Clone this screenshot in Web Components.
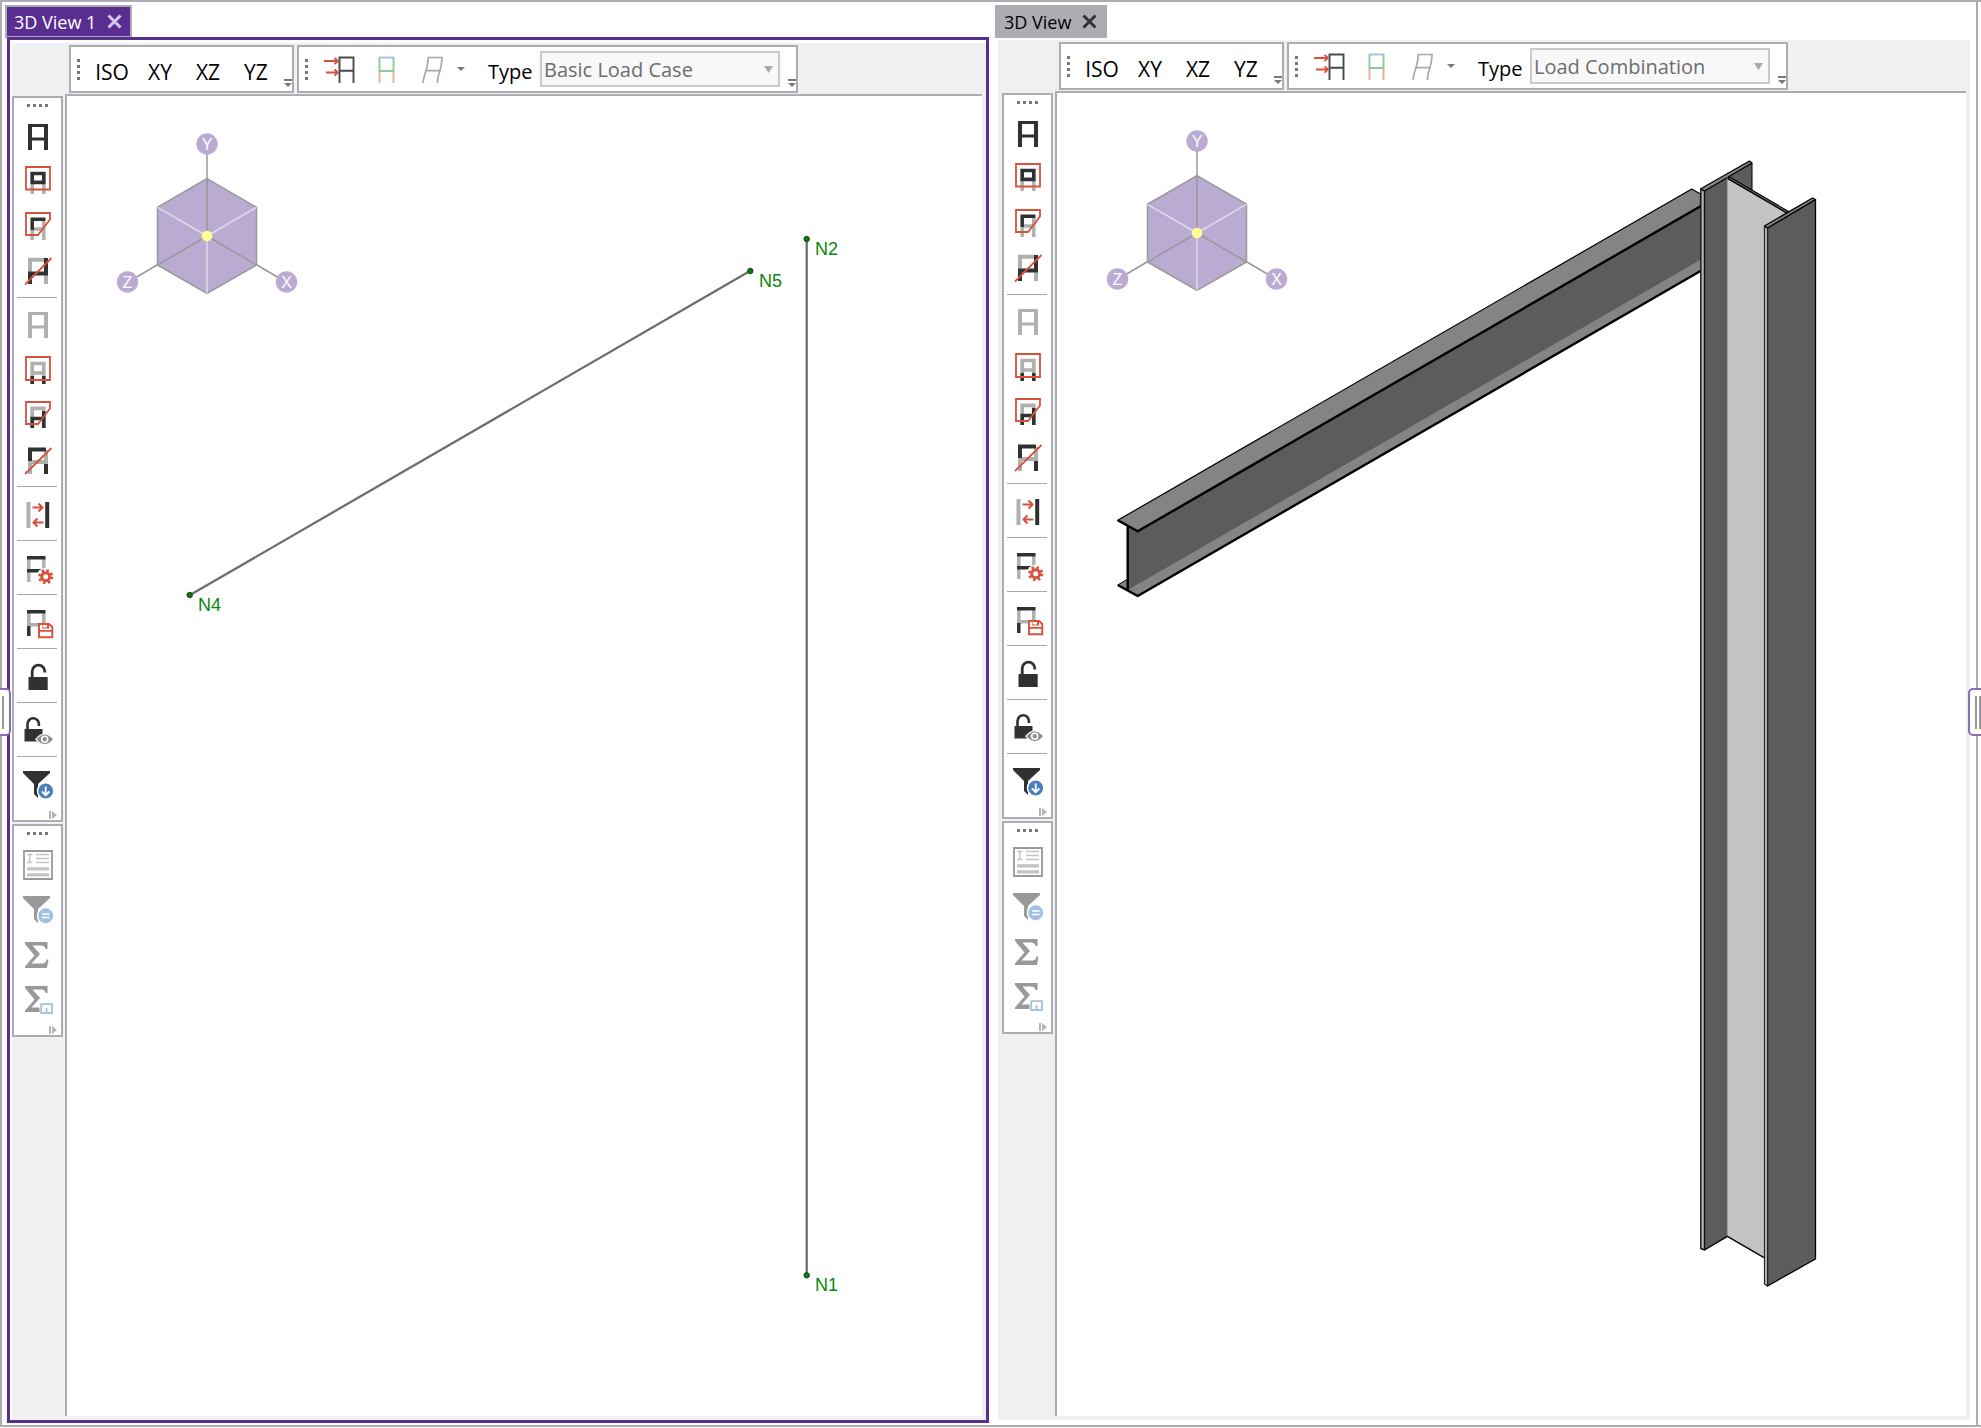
<!DOCTYPE html>
<html lang="en">
<head>
<meta charset="utf-8">
<title>3D View</title>
<style>
  html, body { margin: 0; height: 100%; background: #fff; }
  body {
    font-family: "Open Sans", "Noto Sans", sans-serif;
    --line: #acacb2;
    --panel: #f0f0f0;
    --accent: #5a2e90;
  }
</style>
</head>
<body>
<work-space>
  <view-pane name="3D View 1" load-type="Basic Load Case" active>
    <svg width="100%" height="100%" aria-label="Wireframe model">
      <g transform="translate(-67 -96)">
        <g stroke="#6e6e6e" stroke-width="2.300">
          <path d="M806.700 239V1275M190 595L750 271"/>
        </g>
        <g fill="#0b7d0b" stroke="#1d3a1d" stroke-width="1">
          <circle cx="806.700" cy="239" r="2.700"/><circle cx="806.700" cy="1275.300" r="2.700"/>
          <circle cx="750.300" cy="271" r="2.700"/><circle cx="189.700" cy="595" r="2.700"/>
        </g>
        <g fill="#0a870a" font-family="Liberation Sans, Arial, sans-serif" font-size="18">
          <text x="815" y="255">N2</text>
          <text x="815" y="1291">N1</text>
          <text x="759" y="287">N5</text>
          <text x="198" y="611">N4</text>
        </g>
      </g>
    </svg>
  </view-pane>
  <view-pane name="3D View" load-type="Load Combination">
    <svg width="100%" height="100%" aria-label="Rendered model">
      <g transform="translate(-1057 -93)" stroke-linejoin="round">
        <!-- beam -->
        <path d="M1117.7 585L1127.7 579.3L1700.5 248V271L1137.7 596Z" fill="#848484"/>
        <path d="M1127.7 526L1700.5 200V259.7L1127.7 590Z" fill="#5c5c5c"/>
        <path d="M1117.7 520.3L1691.7 189L1700.5 194V206L1137.7 531.3Z" fill="#848484" stroke="#000" stroke-width="1.2"/>
        <path d="M1117.7 520.3L1137.7 531.3L1700.5 206.3M1117.7 585L1137.7 596L1700.5 271M1127.7 526V590" fill="none" stroke="#000" stroke-width="2.4"/>
        <path d="M1117.7 585L1127 579.5" stroke="#000" stroke-width="1"/>
        <!-- column: rear flange -->
        <path d="M1728 176L1752 163V190L1744 186Z" fill="#5c5c5c" stroke="#000"/>
        <path d="M1704.5 191L1727.4 177V1236.3L1704.5 1250Z" fill="#5c5c5c"/>
        <path d="M1700.8 189L1704.5 191V1250L1700.8 1248.5Z" fill="#b2b2b2" stroke="#111" stroke-width="1.4"/>
        <path d="M1700.8 188.7L1749.5 161L1752 163L1704.5 191Z" fill="#848484" stroke="#000" stroke-width="1.3"/>
        <!-- column: web -->
        <path d="M1727.4 177L1788 212L1765 226V1257.7L1727.4 1236.3Z" fill="#c3c3c3"/>
        <path d="M1727.4 178V1236" stroke="#999" stroke-width="1"/>
        <path d="M1704.5 1250L1727.4 1236.3L1764 1257.7" fill="none" stroke="#000" stroke-width="1.4"/>
        <path d="M1728 177.5L1788 212.5" stroke="#000" stroke-width="3.4"/>
        <path d="M1729 177.8L1787 211.8" stroke="#777" stroke-width="1"/>
        <!-- column: front flange -->
        <path d="M1767.5 228L1815.5 199.5V1259L1767.5 1286Z" fill="#5c5c5c" stroke="#000" stroke-width="1.3"/>
        <path d="M1764.5 226L1767.5 228V1286L1764.5 1284Z" fill="#c0c0c0" stroke="#222" stroke-width="1.2"/>
        <path d="M1764.5 226L1812.5 198L1815.5 199.5L1767.5 228Z" fill="#848484" stroke="#000" stroke-width="1.3"/>
      </g>
    </svg>
  </view-pane>
</work-space>

<script>
const define = (tag, build) => customElements.define(tag, class extends HTMLElement {
  connectedCallback() {
    if (this.shadowRoot) return;
    this.attachShadow({ mode: "open" }).innerHTML = build(this);
  }
});

const D = "#303232", G = "#b0b0b0", R = "#d9503c", M = "#999";
const bar = (c, w, d) => `<path d="${d}" stroke="${c}" stroke-width="${w}" fill="none"/>`;
const zone = bar(R, 1.8, "M12 9H36V15.500L24 31H12Z");
const funnel = (c) => `<path d="M9 9H36V11L24 22V36L20 32V22L9 11Z" fill="${c}"/>`;
const sigma = `<path d="M11 10H33.500V17H31.500Q31 13.500 27 13.500H18.500L26 22L17.500 31.500H28Q32 31.500 32.500 27.500H34.500L33 36H11V34.500L20.500 23.500L11 12Z" fill="${M}"/>`;

/* Glyphs are drawn on a 47 by 45 grid, the size of one rail button. */
const icons = {
  "frame": bar(D, 4, "M16 10V36M32 10V36") + bar(D, 3, "M14 11.500H34M14 25H34"),
  "frame-window": bar(G, 3.5, "M18.200 25V35M29.800 25V35") + bar(R, 1.8, "M12 8H36V30.500H12Z") +
    bar(D, 3.7, "M18.200 14.500H29.800V23.300H18.200Z"),
  "frame-polygon": bar(G, 3.5, "M18.200 26V36M29.800 17V36M18 25H30") + bar(D, 3.5, "M18.200 26V15.300H31.500") + zone,
  "frame-line": bar(G, 4, "M16 23V10.700H32M32 24V35") + bar(D, 4, "M32 9V24.500H16V35") + bar(R, 1.8, "M11 35.500L37.500 9"),
  "off": bar(G, 4, "M16 9V35M32 9V35") + bar(G, 3, "M14 10.500H34M14 24H34"),
  "off-window": bar(G, 3.7, "M18.200 15.500H29.800V25H18.200ZM18.200 25V28M29.800 25V28") +
    bar(D, 3.7, "M18.200 28V36M29.800 28V36") + bar(R, 1.8, "M12 9H36V32H12Z"),
  "off-polygon": bar(G, 3.7, "M18.200 25V15.300H29.800V18") + bar(D, 3.7, "M29.800 18V35M18.200 35V25.500H29.800") + zone,
  "off-line": bar(G, 4, "M32 12V26M16 36V24H32") + bar(D, 4, "M16 23V11.500H32M32 26V36") + bar(R, 1.8, "M11 36L37.500 10"),
  "swap": bar(G, 4, "M14.500 10V36") + bar(D, 4, "M33.200 10V36") +
    bar(R, 2, "M18.500 15.500H28.500M24.500 11.500L28.500 15.500L24.500 19.500M29.500 30.500H19.500M23.500 26.500L19.500 30.500L23.500 34.500"),
  "settings": bar(G, 3.5, "M14.800 13V36M29.800 13V25") + bar(D, 3.5, "M13 11.800H31.500M13 24.800H27") +
    `<circle cx="31.700" cy="30.700" r="9" fill="#fff"/><circle cx="31.700" cy="30.700" r="4" fill="none" stroke="${R}" stroke-width="3"/>
     <circle cx="31.700" cy="30.700" r="6.300" fill="none" stroke="${R}" stroke-width="2.600" stroke-dasharray="2.500 2.448"/>`,
  "save": bar(G, 3.5, "M14.800 13V26M29.800 13V23M13 24.800H24") + bar(D, 3.5, "M13 11.800H31.500M14.800 26V36") +
    `<path d="M25 24H35L38.300 27V37.300H25Z" fill="#fff" stroke="${R}" stroke-width="1.900"/>
     <path d="M28 24H35V28.500H28ZM25 30H38V31.800H25Z" fill="${R}"/><path d="M28.500 25H33V27.500H28.500Z" fill="#fff"/>`,
  "lock": `<path d="M14.500 23H33.700V36H14.500Z" fill="${D}"/>` + bar(D, 2.8, "M18.200 24V17.500A6.300 6.300 0 0 1 30.800 17.500V18.500"),
  "lock-view": `<path d="M10.500 21H28.500V33.500H10.500Z" fill="${D}"/>` + bar(D, 2.6, "M13.500 22V16A5.700 5.700 0 0 1 24.900 16V18") +
    `<path d="M21 31.300Q30.700 19 40.400 31.300Q30.700 43 21 31.300Z" fill="#fff"/>
     <path d="M22.500 31.300Q30.700 21.500 39 31.300Q30.700 41 22.500 31.300Z" fill="#8e8e8e"/>
     <circle cx="30.700" cy="31.300" r="3" fill="#8e8e8e" stroke="#fff" stroke-width="1.500"/>`,
  "filter": funnel(D) + `<circle cx="31.700" cy="29" r="8.200" fill="#4a7fbb" stroke="#fff" stroke-width="1.500"/>` +
    bar("#fff", 1.8, "M31.700 24.500V33M28 29.500L31.700 33.200L35.400 29.500"),
  "report": `<path d="M10 9H38V37H10Z" fill="#fff" stroke="${M}" stroke-width="1.800"/>` +
    bar("#c4c4c4", 1.5, "M13 12.500H18.500M15.700 12.500V20.500M13 20.500H18.500M22 12.500H35M22 16.500H35M22 20.500H35") +
    bar("#c4c4c4", 3.2, "M13 26.800H35M13 32.800H35"),
  "filter-equal": funnel(M) + `<circle cx="31.700" cy="28.700" r="8.200" fill="#a4c0e0" stroke="#fff" stroke-width="1.500"/>` +
    bar("#fff", 1.7, "M28 27H35.500M28 30.500H35.500"),
  "sum": sigma,
  "sum-local": `<g transform="translate(0 -1)">${sigma}</g><path d="M25.500 25.500H39.500V37.500H25.500Z" fill="#fff"/>` +
    bar("#a4c0e0", 1.8, "M27.200 27.200H38V36H27.200ZM32.600 31V36"),
  "loads": bar("#4a4a4a", 1.9, "M23.500 36V10.500H37.500V36M23.500 23.700H37.500") +
    bar(R, 1.8, "M8 14H22M18.500 10.800L22 14L18.500 17.200M10 25.500H22M18.500 22.300L22 25.500L18.500 28.700"),
  "colors": bar("#efa79c", 1.9, "M16.500 24V36M30.500 24V36") + bar("#8ccb9c", 1.9, "M16.500 11V24H30.500V11") + bar("#a4c0e0", 1.9, "M15.600 10.500H31.400"),
  "deformed": bar("#a8a8a8", 1.7, "M13 36Q13.500 31 16 23.500Q18 17 18.300 10.500H32Q32 17 30 23.500Q27.500 30 27.300 36M15.800 23.700H30")
};

/* Button holding either slotted text or a named glyph. */
define("tool-button", el => `
  <style>
    :host { display: block; }
    button { display: flex; align-items: center; justify-content: center; width: 100%; height: 100%;
      margin: 0; padding: 0; border: 0; background: none; font: inherit; color: #000; }
    .text { padding-top: 5px; }
    svg { flex: none; }
  </style>
  <button type="button" aria-label="${el.getAttribute("label") || el.textContent}">
    ${el.hasAttribute("icon")
      ? `<svg width="47" height="45" viewBox="0 0 47 45" aria-hidden="true">${icons[el.getAttribute("icon")]}</svg>`
      : `<span class="text"><slot></slot></span>`}
    ${el.hasAttribute("menu")
      ? `<svg width="8" height="4" viewBox="0 0 8 4" aria-hidden="true"><path d="M0 0H8L4 4Z" fill="#777"/></svg>` : ""}
  </button>`);

/* Bordered strip with a drag grip, slotted tools and an overflow mark. */
define("tool-strip", el => {
  const v = el.hasAttribute("vertical");
  const dot = "<i></i>".repeat(4);
  return `
  <style>
    :host { display: flex; flex-direction: ${v ? "column" : "row"}; box-sizing: border-box;
      border: 2px solid var(--line); background: #fff; flex: none; }
    .grip { display: flex; flex: none; gap: 3px; box-sizing: border-box;
      ${v ? "height: 16px; padding-top: 6px; justify-content: center;"
          : "width: 17px; padding-left: 6px; flex-direction: column; justify-content: center;"} }
    i { width: 3px; height: 3px; background: #777; }
    .more { flex: none; display: flex; align-items: flex-end; justify-content: flex-end;
      ${v ? "height: 13px; padding-right: 4px;" : "width: 12px; padding-bottom: 4px;"} }
  </style>
  <div class="grip">${dot}</div>
  <slot></slot>
  <div class="more">${v
    ? `<svg width="8" height="12"><path d="M0 3H2V11H0ZM3 3L8 7L3 11Z" fill="#b4b4b4"/></svg>`
    : `<svg width="8" height="9"><path d="M0 1H8V3H0ZM0 5H8L4 9Z" fill="#777"/></svg>`}</div>`;
});

define("tool-rule", () => `
  <style>:host { display: block; height: 1px; margin: 3px 4px 5px 3px; background: #a8a8ad; }</style>`);

define("load-type", el => `
  <style>
    :host { display: flex; align-items: center; font-size: 20px; color: #000; }
    label { width: 52px; padding-top: 5px; }
    .box { display: grid; align-items: center; }
    select, svg { grid-area: 1 / 1; }
    select { appearance: none; width: 240px; height: 36px; margin: 0; padding: 1px 2px 0; box-sizing: border-box;
      border: 2px solid #c9c9cf; border-radius: 0; background: #f8f8f8; color: #6d6d6d; opacity: 1; font: inherit; line-height: 30px; }
    svg { justify-self: end; margin-right: 7px; }
  </style>
  <label for="type">Type</label>
  <span class="box">
    <select id="type" disabled><option>${el.getAttribute("value")}</option></select>
    <svg width="9" height="7" aria-hidden="true"><path d="M0 0H9L4.500 7Z" fill="#a8a8ad"/></svg>
  </span>`);

define("view-cube", () => `
  <style>:host { display: block; width: 182px; height: 168px; }</style>
  <svg width="182" height="168" viewBox="0 0 182 168" aria-label="View cube">
    <g transform="translate(91 104)" stroke-width="1.500">
      <path d="M0 -57V-84M50 29L72 42M-50 29L-72 42" stroke="#999"/>
      <path d="M0 -57.300L49.500 -28.700V29L0 57.300L-49.500 29V-28.700Z" fill="#baabd3" stroke="#999"/>
      <path d="M0 0V-57.300M0 0L49.500 29M0 0L-49.500 29" stroke="#999"/>
      <path d="M0 0V57.300M0 0L49.500 -28.700M0 0L-49.500 -28.700" stroke="#dfdbe6"/>
      <circle r="5.300" fill="#ffff93"/>
      <g fill="#baabd3"><circle cy="-92" r="10.700"/><circle cx="79.500" cy="46" r="10.700"/><circle cx="-79.500" cy="46" r="10.700"/></g>
      <g fill="#fff" font-family="Liberation Sans, Arial, sans-serif" font-size="16" text-anchor="middle">
        <text y="-86">Y</text><text x="79.500" y="52">X</text><text x="-79.500" y="52">Z</text>
      </g>
    </g>
  </svg>`);

const tool = (icon, label) => `<tool-button icon="${icon}" label="${label}"></tool-button>`;
const rule = "<tool-rule></tool-rule>";

define("view-pane", el => `
  <style>
    :host { display: flex; flex-direction: column; min-width: 0; }
    .tab { align-self: flex-start; display: flex; align-items: center; box-sizing: border-box; height: 33px;
      border: 2px solid var(--line); background: var(--line); color: #000; font-size: 18px; font-weight: 500; padding: 0 8px 0 7px; gap: 11px; }
    .tab button { display: flex; border: 0; padding: 0; margin: 0; background: none; color: #333; }
    .frame { flex: 1; display: flex; min-height: 0; margin: 2px 0 3px 3px; }
    .body { flex: 1; min-width: 0; display: grid; grid-template: auto 1fr / 53px 1fr;
      background: var(--panel); padding: 2px 4px 4px; }
    .top { grid-column: 2; display: flex; gap: 3px; padding-left: 4px; margin-bottom: 1px; }
    .top tool-strip { height: 48px; }
    .top tool-button { width: 48px; font-size: 21px; font-weight: 500; }
    .top tool-button[icon] { width: 47px; }
    .top tool-button[menu] { width: 55px; }
    load-type { margin: 0 4px 0 23px; }
    .rail { display: flex; flex-direction: column; gap: 2px; padding: 2px 2px 0 0; }
    .rail tool-button { height: 45px; }
    .canvas { position: relative; background: #fff; border: solid var(--line); border-width: 2px 0 0 2px; overflow: hidden; }
    .canvas ::slotted(svg) { display: block; position: absolute; inset: 0; }
    view-cube { position: absolute; left: 49px; top: 36px; }

    :host([active]) .tab { background: var(--accent); color: #fff; }
    :host([active]) .tab button { color: #d3c6e6; }
    :host([active]) .frame { margin: -1px 0 0 2px; border: 3px solid var(--accent); padding: 3px 0 0 2px; }
    :host([active]) .body { padding-left: 0; }
  </style>
  <div class="tab"><span>${el.getAttribute("name")}</span>
    <button type="button" aria-label="Close"><svg width="15" height="15" viewBox="0 0 15 15"><path d="M1.500 1.500L13.500 13.500M13.500 1.500L1.500 13.500" stroke="currentColor" stroke-width="3"/></svg></button>
  </div>
  <div class="frame"><div class="body">
    <div class="top">
      <tool-strip>
        <tool-button>ISO</tool-button><tool-button>XY</tool-button><tool-button>XZ</tool-button><tool-button>YZ</tool-button>
      </tool-strip>
      <tool-strip>
        ${tool("loads", "Loads")}${tool("colors", "Colors")}
        <tool-button icon="deformed" label="Deformed shape" menu></tool-button>
        <load-type value="${el.getAttribute("load-type")}"></load-type>
      </tool-strip>
    </div>
    <div class="rail">
      <tool-strip vertical>
        ${tool("frame", "Select all")}${tool("frame-window", "Select by window")}${tool("frame-polygon", "Select by polygon")}${tool("frame-line", "Select by line")}
        ${rule}
        ${tool("off", "Unselect all")}${tool("off-window", "Unselect by window")}${tool("off-polygon", "Unselect by polygon")}${tool("off-line", "Unselect by line")}
        ${rule}${tool("swap", "Invert selection")}
        ${rule}${tool("settings", "Criteria selection")}
        ${rule}${tool("save", "Saved selections")}
        ${rule}${tool("lock", "Lock")}
        ${rule}${tool("lock-view", "Lock view")}
        ${rule}${tool("filter", "Filter")}
      </tool-strip>
      <tool-strip vertical>
        ${tool("report", "Report")}${tool("filter-equal", "Filter results")}${tool("sum", "Sum")}${tool("sum-local", "Local sum")}
      </tool-strip>
    </div>
    <div class="canvas"><slot></slot><view-cube></view-cube></div>
  </div></div>`);

define("work-space", () => `
  <style>
    :host { display: block; position: relative; box-sizing: border-box; height: 100vh; padding: 0 3px 1px 0; overflow: hidden; }
    .dock { box-sizing: border-box; height: 100%; display: grid; grid-template: 1fr / 984fr 975fr; gap: 6px;
      border: 2px solid var(--line); padding: 3px 6px 2px 3px; }
    .handle { position: absolute; top: calc(50% - 26px); height: 48px; width: 24px; box-sizing: border-box;
      border: 2px solid #8a6fb5; border-radius: 5px; background: #fff; display: flex; align-items: center; gap: 2px; }
    .handle i { width: 2px; height: 33px; background: #999; }
    .left { left: -13px; padding-left: 13px; }
    .right { right: -11px; padding-left: 5px; }
    .edge { position: absolute; right: 0; width: 3px; height: 2px; background: var(--line); }
  </style>
  <div class="dock"><slot></slot></div>
  <div class="edge" style="top:0"></div><div class="edge" style="bottom:1px"></div>
  <div class="handle left"><i></i></div>
  <div class="handle right"><i></i><i></i></div>`);
</script>
</body>
</html>
